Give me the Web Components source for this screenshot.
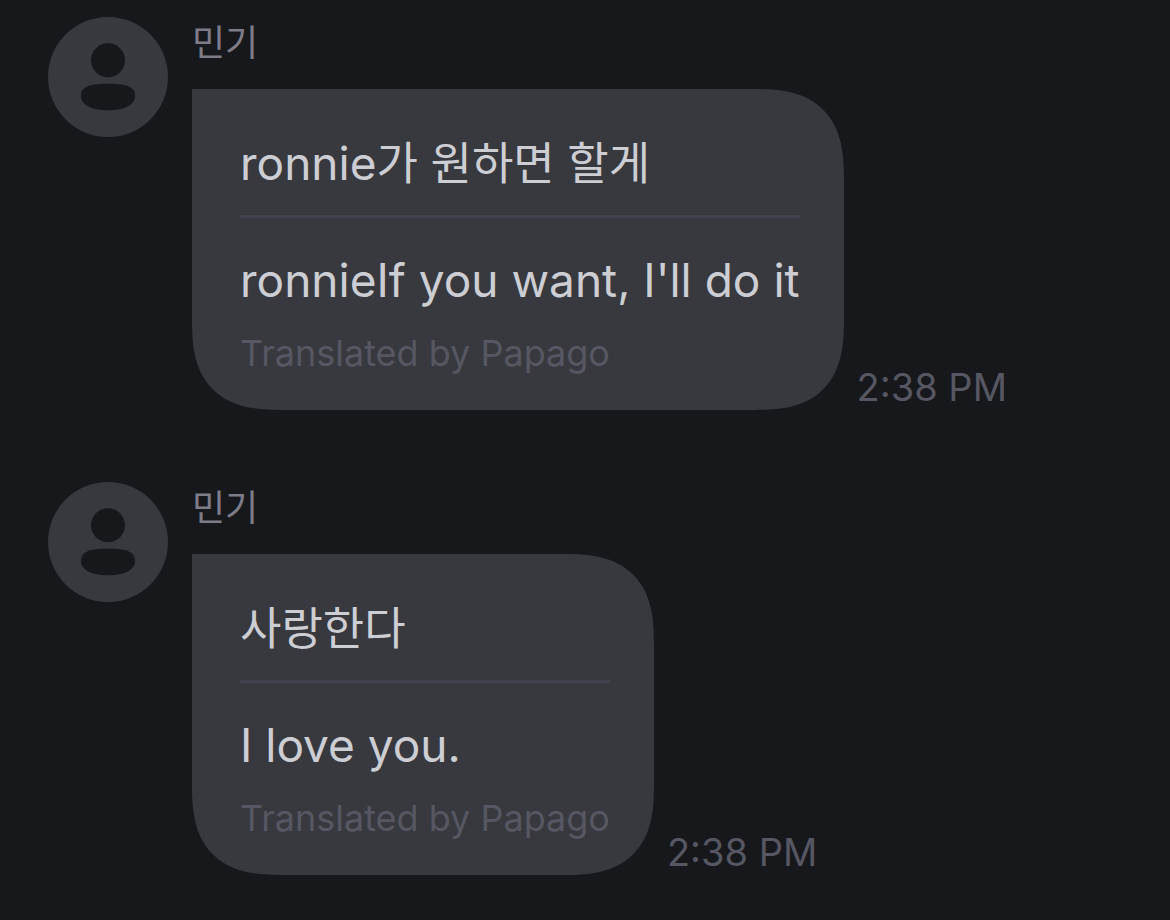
<!DOCTYPE html>
<html lang="ko">
<head>
<meta charset="utf-8">
<meta name="viewport" content="width=device-width, initial-scale=1">
<title>Chat</title>
<style>
    body {
        margin: 0;
        background: #17181c;
        font-family: Inter, "Noto Sans CJK KR", sans-serif;
    }

    .hangul {
        font-size: 45px;
    }
</style>
</head>
<body>
<chat-thread>
    <chat-message name="민기" time="2:38 PM">
        <translated-text>
            <span slot="original">ronnie<span class="hangul">가 원하면 할게</span></span>
            <span slot="translation">ronnieIf you want, I'll do it</span>
        </translated-text>
    </chat-message>
    <chat-message name="민기" time="2:38 PM">
        <translated-text>
            <span slot="original" class="hangul">사랑한다</span>
            <span slot="translation">I love you.</span>
        </translated-text>
    </chat-message>
</chat-thread>

<script>
class ChatThread extends HTMLElement {
    constructor() {
        super();
        this.attachShadow({ mode: "open" });
        this.shadowRoot.innerHTML = `
            <style>
                :host {
                    display: flex;
                    flex-direction: column;
                    gap: 72px;
                    min-height: 100vh;
                    padding: 17px 48px 45px;
                    box-sizing: border-box;
                    background: #17181c;
                }
            </style>
            <slot></slot>
        `;
    }
}

class UserAvatar extends HTMLElement {
    constructor() {
        super();
        this.attachShadow({ mode: "open" });
        this.shadowRoot.innerHTML = `
            <style>
                :host {
                    display: block;
                    flex: none;
                    width: 120px;
                    height: 120px;
                }

                svg {
                    display: block;
                }
            </style>
            <svg width="120" height="120" viewBox="0 0 120 120" aria-hidden="true">
                <circle cx="60" cy="60" r="60" fill="#38393e"/>
                <circle cx="60" cy="43.3" r="17" fill="#17181c"/>
                <path d="M60 66.7C78 66.7 87 69 87 79C87 88 76 93.3 60 93.3S33 88 33 79C33 69 42 66.7 60 66.7Z" fill="#17181c"/>
            </svg>
        `;
    }
}

class ChatMessage extends HTMLElement {
    constructor() {
        super();
        this.attachShadow({ mode: "open" });
    }

    connectedCallback() {
        this.shadowRoot.innerHTML = `
            <style>
                :host {
                    display: flex;
                    align-items: flex-start;
                    gap: 24px;
                }

                .body {
                    display: flex;
                    flex-direction: column;
                    gap: 20px;
                    min-width: 0;
                }

                .name {
                    font-size: 36px;
                    line-height: 52px;
                    color: #7d7c88;
                }

                .row {
                    display: flex;
                    align-items: flex-end;
                    gap: 13px;
                }

                .bubble {
                    padding: 47px 44px 35px 48px;
                    background: #38393e;
                    border-radius: 0 72px 72px 72px;
                }

                /* continuous corners where the browser has them */
                @supports (corner-shape: squircle) {
                    .bubble {
                        border-radius: 0 90px 90px 90px;
                        corner-shape: superellipse(1.4);
                    }
                }

                time {
                    flex: none;
                    font-size: 38px;
                    line-height: 46px;
                    color: #565762;
                }
            </style>
            <user-avatar></user-avatar>
            <div class="body">
                <div class="name"></div>
                <div class="row">
                    <div class="bubble"><slot></slot></div>
                    <time></time>
                </div>
            </div>
        `;
        this.shadowRoot.querySelector(".name").textContent = this.getAttribute("name");
        this.shadowRoot.querySelector("time").textContent = this.getAttribute("time");
    }
}

class TranslatedText extends HTMLElement {
    constructor() {
        super();
        this.attachShadow({ mode: "open" });
        this.shadowRoot.innerHTML = `
            <style>
                :host {
                    display: block;
                    color: #cdced4;
                }

                .text {
                    font-size: 46px;
                    line-height: 54px;
                }

                hr {
                    height: 3px;
                    margin: 24px 0 35px;
                    border: 0;
                    background: #42424e;
                }

                .credit {
                    margin-top: 24px;
                    font-size: 36px;
                    line-height: 44px;
                    color: #565762;
                }
            </style>
            <div class="text"><slot name="original"></slot></div>
            <hr>
            <div class="text"><slot name="translation"></slot></div>
            <div class="credit">Translated by Papago</div>
        `;
    }
}

customElements.define("chat-thread", ChatThread);
customElements.define("user-avatar", UserAvatar);
customElements.define("chat-message", ChatMessage);
customElements.define("translated-text", TranslatedText);
</script>
</body>
</html>
